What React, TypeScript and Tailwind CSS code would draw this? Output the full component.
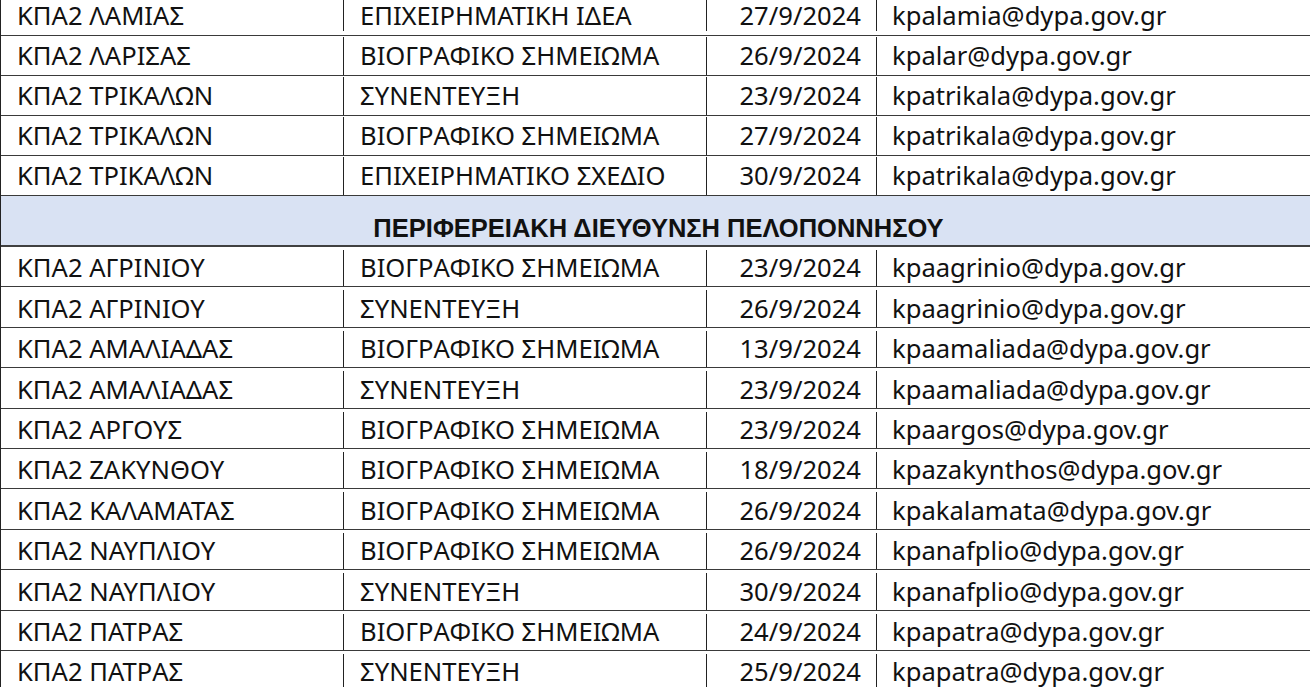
import React from "react";

type Row = [string, string, string, string];

const top: Row[] = [
  ["ΚΠΑ2 ΛΑΜΙΑΣ", "ΕΠΙΧΕΙΡΗΜΑΤΙΚΗ ΙΔΕΑ", "27/9/2024", "kpalamia@dypa.gov.gr"],
  ["ΚΠΑ2 ΛΑΡΙΣΑΣ", "ΒΙΟΓΡΑΦΙΚΟ ΣΗΜΕΙΩΜΑ", "26/9/2024", "kpalar@dypa.gov.gr"],
  ["ΚΠΑ2 ΤΡΙΚΑΛΩΝ", "ΣΥΝΕΝΤΕΥΞΗ", "23/9/2024", "kpatrikala@dypa.gov.gr"],
  ["ΚΠΑ2 ΤΡΙΚΑΛΩΝ", "ΒΙΟΓΡΑΦΙΚΟ ΣΗΜΕΙΩΜΑ", "27/9/2024", "kpatrikala@dypa.gov.gr"],
  ["ΚΠΑ2 ΤΡΙΚΑΛΩΝ", "ΕΠΙΧΕΙΡΗΜΑΤΙΚΟ ΣΧΕΔΙΟ", "30/9/2024", "kpatrikala@dypa.gov.gr"],
];

const bottom: Row[] = [
  ["ΚΠΑ2 ΑΓΡΙΝΙΟΥ", "ΒΙΟΓΡΑΦΙΚΟ ΣΗΜΕΙΩΜΑ", "23/9/2024", "kpaagrinio@dypa.gov.gr"],
  ["ΚΠΑ2 ΑΓΡΙΝΙΟΥ", "ΣΥΝΕΝΤΕΥΞΗ", "26/9/2024", "kpaagrinio@dypa.gov.gr"],
  ["ΚΠΑ2 ΑΜΑΛΙΑΔΑΣ", "ΒΙΟΓΡΑΦΙΚΟ ΣΗΜΕΙΩΜΑ", "13/9/2024", "kpaamaliada@dypa.gov.gr"],
  ["ΚΠΑ2 ΑΜΑΛΙΑΔΑΣ", "ΣΥΝΕΝΤΕΥΞΗ", "23/9/2024", "kpaamaliada@dypa.gov.gr"],
  ["ΚΠΑ2 ΑΡΓΟΥΣ", "ΒΙΟΓΡΑΦΙΚΟ ΣΗΜΕΙΩΜΑ", "23/9/2024", "kpaargos@dypa.gov.gr"],
  ["ΚΠΑ2 ΖΑΚΥΝΘΟΥ", "ΒΙΟΓΡΑΦΙΚΟ ΣΗΜΕΙΩΜΑ", "18/9/2024", "kpazakynthos@dypa.gov.gr"],
  ["ΚΠΑ2 ΚΑΛΑΜΑΤΑΣ", "ΒΙΟΓΡΑΦΙΚΟ ΣΗΜΕΙΩΜΑ", "26/9/2024", "kpakalamata@dypa.gov.gr"],
  ["ΚΠΑ2 ΝΑΥΠΛΙΟΥ", "ΒΙΟΓΡΑΦΙΚΟ ΣΗΜΕΙΩΜΑ", "26/9/2024", "kpanafplio@dypa.gov.gr"],
  ["ΚΠΑ2 ΝΑΥΠΛΙΟΥ", "ΣΥΝΕΝΤΕΥΞΗ", "30/9/2024", "kpanafplio@dypa.gov.gr"],
  ["ΚΠΑ2 ΠΑΤΡΑΣ", "ΒΙΟΓΡΑΦΙΚΟ ΣΗΜΕΙΩΜΑ", "24/9/2024", "kpapatra@dypa.gov.gr"],
  ["ΚΠΑ2 ΠΑΤΡΑΣ", "ΣΥΝΕΝΤΕΥΞΗ", "25/9/2024", "kpapatra@dypa.gov.gr"],
];

function DataRow({ r, kind }: { r: Row; kind: "first" | "top" | "bottom" }) {
  const size =
    kind === "first"
      ? "h-[36px] pb-[4px]"
      : kind === "top"
      ? "h-[40px] pt-[1px]"
      : "h-[40.4px] pt-[3px]";
  return (
    <div className={"grid grid-cols-[343px_363px_170px_1fr] border-b-[1.5px] border-[#3a3a3a] " + size}>
      <div className="flex items-center border-r border-[#222] pl-[16px] whitespace-nowrap">{r[0]}</div>
      <div className="flex items-center border-r border-[#222] pl-[16px] whitespace-nowrap">{r[1]}</div>
      <div className="flex items-center justify-end border-r border-[#222] pr-[15px] whitespace-nowrap">{r[2]}</div>
      <div className="flex items-center pl-[15px] whitespace-nowrap">{r[3]}</div>
    </div>
  );
}

export default function App() {
  return (
    <div className="h-[687px] w-[1310px] overflow-hidden bg-white">
      <div
        className="w-[1316px] border-l border-[#222] text-[25.6px] leading-none text-[#111]"
        style={{ fontFamily: '"Noto Sans", "Open Sans", sans-serif' }}
      >
        {top.map((r, i) => (
          <DataRow key={"t" + i} r={r} kind={i === 0 ? "first" : "top"} />
        ))}
        <div
          className="flex h-[51px] items-end justify-center border-b-2 border-[#404040] bg-[#d9e2f3] pb-[4px] text-[25.5px] font-bold text-[#111]"
          style={{ fontFamily: '"Liberation Sans", Arial, sans-serif' }}
        >
          ΠΕΡΙΦΕΡΕΙΑΚΗ ΔΙΕΥΘΥΝΣΗ ΠΕΛΟΠΟΝΝΗΣΟΥ
        </div>
        {bottom.map((r, i) => (
          <DataRow key={"b" + i} r={r} kind="bottom" />
        ))}
      </div>
    </div>
  );
}
